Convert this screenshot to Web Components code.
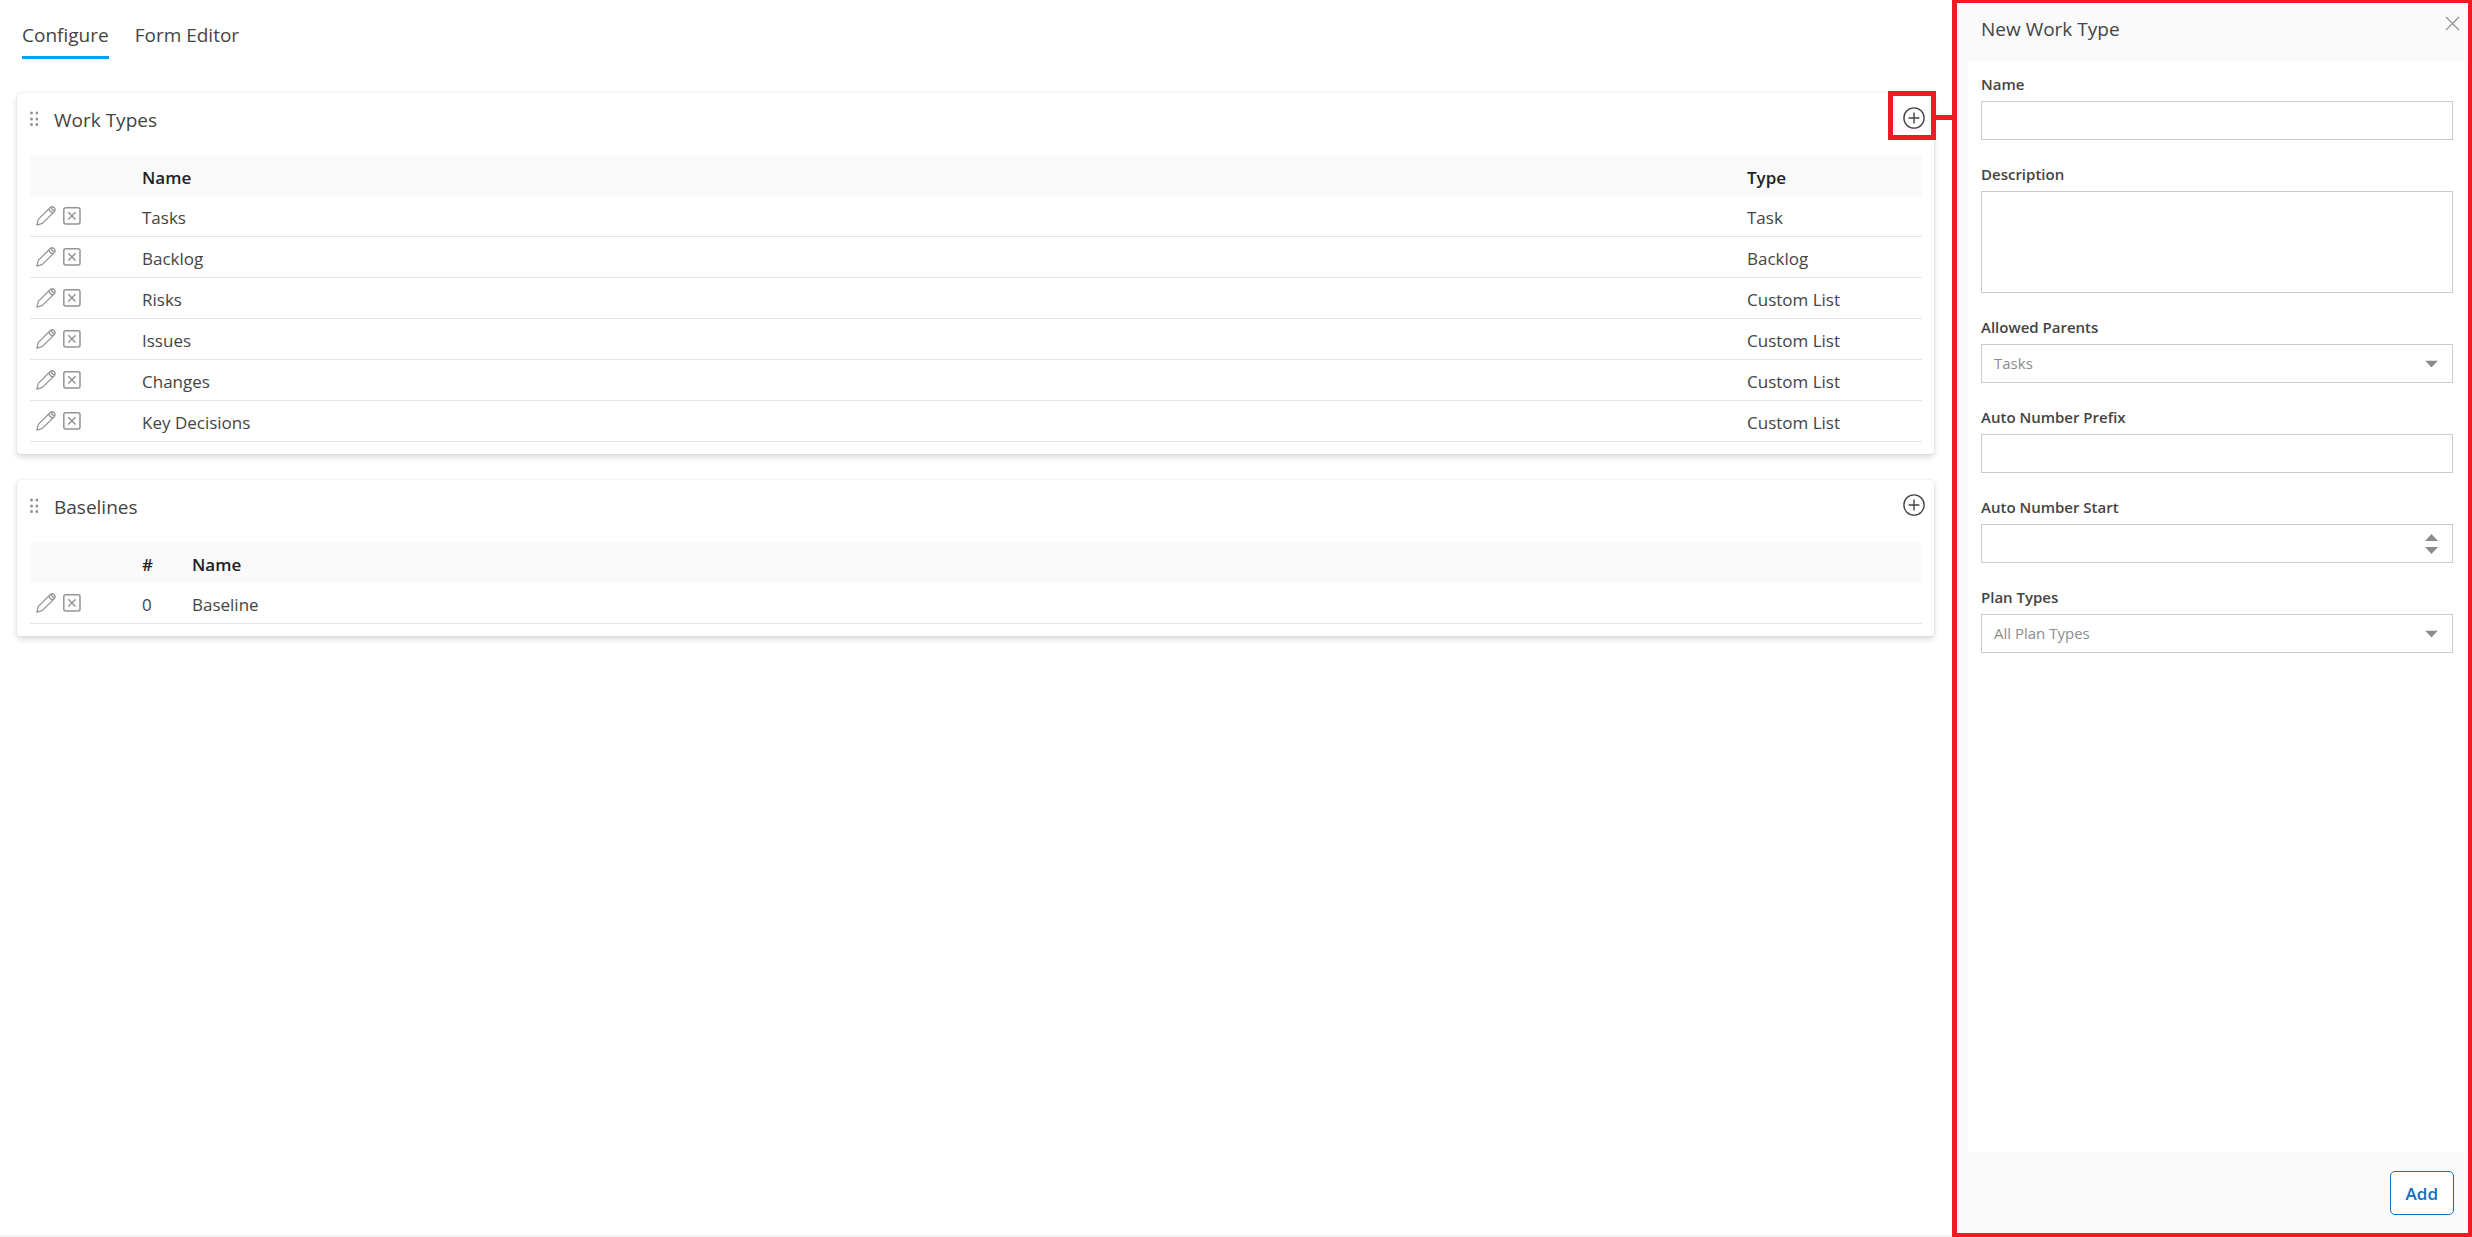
<!DOCTYPE html>
<html lang="en">
<head>
<meta charset="utf-8">
<title>Work Types</title>
<style>
  :root {
    --text: #444;
    --heading: #222;
    --muted: #8c8c8c;
    --line: #e6e6e6;
    --tint: #fafafa;
    --accent: #00a2f8;
    --action: #106ebe;
    --mark: #ed1c24;
  }
  * { box-sizing: border-box; }
  body {
    margin: 0;
    background: #fff;
    color: var(--text);
    font-family: "Open Sans", "Noto Sans", sans-serif;
    font-size: 17px;
  }
</style>
</head>
<body>
<app-shell>
  <tab-bar tabs="Configure,Form Editor"></tab-bar>
  <section-card highlighted>
    <span slot="title">Work Types</span>
    <data-grid columns='[{"label":"Name"},{"label":"Type","width":175}]'
      rows='[["Tasks","Task"],["Backlog","Backlog"],["Risks","Custom List"],["Issues","Custom List"],["Changes","Custom List"],["Key Decisions","Custom List"]]'></data-grid>
  </section-card>
  <section-card>
    <span slot="title">Baselines</span>
    <data-grid columns='[{"label":"#","width":50},{"label":"Name"}]' rows='[["0","Baseline"]]'></data-grid>
  </section-card>
  <side-panel slot="panel">
    <span slot="title">New Work Type</span>
    <form-field label="Name"></form-field>
    <form-field label="Description" kind="textarea"></form-field>
    <form-field label="Allowed Parents" kind="select" value="Tasks"></form-field>
    <form-field label="Auto Number Prefix"></form-field>
    <form-field label="Auto Number Start" kind="number"></form-field>
    <form-field label="Plan Types" kind="select" value="All Plan Types"></form-field>
  </side-panel>
</app-shell>

<script>
const BASE = `
  *, *::before, *::after { box-sizing: border-box; }
  button { font: inherit; color: inherit; background: none; border: 0; padding: 0; margin: 0; cursor: pointer; }
  svg { display: block; }
`;

class Base extends HTMLElement {
  connectedCallback() {
    if (this.shadowRoot) return;
    this.attachShadow({ mode: 'open' }).innerHTML = `<style>${BASE}${this.css()}</style>${this.html()}`;
  }
}

class AppShell extends Base {
  css() { return `
    :host { display: flex; min-height: 100vh; }
    main { flex: 1; min-width: 0; display: flex; flex-direction: column; gap: 26px; padding: 0 18px 0 17px; border-bottom: 2px solid #f4f4f4; }
    ::slotted(side-panel) { flex: 0 0 520px; }
  `; }
  html() { return `<main><slot></slot></main><slot name="panel"></slot>`; }
}

class TabBar extends Base {
  css() { return `
    :host { display: block; padding: 20px 5px 8px; }
    nav { display: flex; gap: 26px; font-size: 19px; line-height: 30px; }
    a { color: inherit; text-decoration: none; padding-bottom: 6px; border-bottom: 3px solid transparent; }
    a[aria-current] { border-color: var(--accent); }
  `; }
  html() {
    return `<nav>${this.getAttribute('tabs').split(',').map((t, i) =>
      `<a href="#"${i ? '' : ' aria-current="page"'}>${t}</a>`).join('')}</nav>`;
  }
}

class SectionCard extends Base {
  css() { return `
    :host { display: block; background: #fff; border-radius: 4px; padding: 0 12px 12px 13px;
      box-shadow: 0 0 2px rgba(0,0,0,.12), 0 3px 6px rgba(0,0,0,.15); }
    header { display: flex; align-items: center; height: 63px; padding-bottom: 13px; }
    h2 { flex: 1; margin: 0 0 0 16px; padding-top: 4px; font-size: 19px; line-height: 26px; font-weight: 400; }
    .add { position: relative; margin-right: -3px; }
    .mark { display: none; position: absolute; left: -15px; top: -16px; width: 48px; height: 49px; border: 5px solid var(--mark); pointer-events: none; }
    .mark::after { content: ""; position: absolute; left: 100%; top: 19px; width: 22px; height: 5px; background: var(--mark); }
    :host([highlighted]) .mark { display: block; }
  `; }
  html() { return `
    <header>
      <svg width="8" height="16" viewBox="0 0 8 16" fill="#949494">
        <circle cx="1.5" cy="3" r="1.5"/><circle cx="7" cy="3" r="1.5"/>
        <circle cx="1.5" cy="9" r="1.5"/><circle cx="7" cy="9" r="1.5"/>
        <circle cx="1.5" cy="14.500" r="1.5"/><circle cx="7" cy="14.500" r="1.5"/>
      </svg>
      <h2><slot name="title"></slot></h2>
      <button class="add" type="button" aria-label="Add">
        <svg width="22" height="22" viewBox="0 0 22 22" fill="none" stroke="#444" stroke-width="1.4">
          <circle cx="11" cy="11" r="10.1"/><path d="M11 5.6V16.4M5.6 11H16.4"/>
        </svg>
        <span class="mark"></span>
      </button>
    </header>
    <slot></slot>`; }
}

class DataGrid extends Base {
  css() { return `
    :host { display: block; }
    table { width: 100%; border-collapse: separate; border-spacing: 0; table-layout: fixed; }
    th, td { padding: 3px 0 0; text-align: left; line-height: 24px; }
    th { height: 40px; background: var(--tint); color: var(--heading); font-weight: 600; }
    td { height: 41px; border-bottom: 1px solid var(--line); }
    td:first-child { padding: 0; }
    .tools { width: 112px; }
    .icons { display: flex; align-items: center; gap: 7px; padding-left: 6px; }
  `; }
  html() {
    const cols = JSON.parse(this.getAttribute('columns'));
    const rows = JSON.parse(this.getAttribute('rows'));
    const tools = `<td><div class="icons">
      <button type="button" aria-label="Edit"><svg width="20" height="20" viewBox="0 0 21 21" fill="none" stroke="#949494" stroke-width="1.3" stroke-linejoin="round">
        <path d="M.9 20.1L2.4 14 15 1.6Q17-.1 19.200 1.700Q21 4 19.200 6L6.700 18.300Z"/><path d="M13.500 3.100Q14.300 6.700 17.800 7.300M16.200 1.200Q16.300 4.600 19.800 5"/>
      </svg></button>
      <button type="button" aria-label="Delete"><svg width="18" height="18" viewBox="0 0 18 18" fill="none" stroke="#949494" stroke-width="1.5">
        <rect x=".8" y=".8" width="16.200" height="16.200" rx="2"/><path d="M5.300 5.300L12.500 12.500M12.500 5.300L5.300 12.500"/>
      </svg></button></div></td>`;
    return `<table><thead><tr><th class="tools"></th>${cols.map(c =>
      `<th${c.width ? ` style="width:${c.width}px"` : ''}>${c.label}</th>`).join('')}</tr></thead>
      <tbody>${rows.map(r => `<tr>${tools}${r.map(v => `<td>${v}</td>`).join('')}</tr>`).join('')}</tbody></table>`;
  }
}

class SidePanel extends Base {
  css() { return `
    :host { display: flex; flex-direction: column; background: var(--tint);
      border: solid var(--mark); border-width: 3px 4px 4px 5px; padding: 0 3px 0 11px; }
    header { display: flex; justify-content: space-between; align-items: flex-start; height: 58px; padding: 13px 5px 0 13px; }
    h2 { margin: 0; font-size: 19px; line-height: 26px; font-weight: 400; }
    form { flex: 1; background: #fff; padding: 13px 12px 0 13px; }
    footer { display: flex; justify-content: flex-end; padding: 19px 11px 18px; }
    footer button { height: 44px; padding: 0 15px; border: 1px solid var(--action); border-radius: 5px; background: #fff; color: var(--action); font-weight: 600; }
  `; }
  html() { return `
    <header><h2><slot name="title"></slot></h2>
      <button type="button" aria-label="Close"><svg width="15" height="15" viewBox="0 0 15 15" stroke="#949494" stroke-width="1.3"><path d="M1 1L14 14M14 1L1 14"/></svg></button>
    </header>
    <form><slot></slot></form>
    <footer><button type="button">Add</button></footer>`; }
}

class FormField extends Base {
  css() { return `
    :host { display: block; padding-bottom: 24px; }
    label { display: block; font-size: 15px; line-height: 20px; font-weight: 600; margin-bottom: 7px; }
    .box { position: relative; }
    input, textarea, select { display: block; width: 100%; height: 39px; margin: 0; padding: 0 12px; border: 1px solid #ccc; border-radius: 0;
      background: #fff; color: var(--muted); font: inherit; font-size: 15px; appearance: none; -moz-appearance: textfield; }
    select { padding-bottom: 2px; }
    textarea { height: 102px; resize: none; }
    input::-webkit-inner-spin-button { appearance: none; }
    svg { position: absolute; right: 15px; top: 50%; transform: translateY(-50%); pointer-events: none; }
  `; }
  html() {
    const kind = this.getAttribute('kind');
    const value = this.getAttribute('value');
    const control = {
      textarea: '<textarea id="c"></textarea>',
      select: `<select id="c"><option>${value}</option></select><svg width="13" height="7" fill="#8c8c8c"><path d="M0 0H13L6.500 7Z"/></svg>`,
      number: '<input id="c" type="number"><svg width="13" height="20" fill="#8c8c8c"><path d="M0 7H13L6.500 0ZM0 13H13L6.500 20Z"/></svg>'
    }[kind] || '<input id="c" type="text">';
    return `<label for="c">${this.getAttribute('label')}</label><div class="box">${control}</div>`;
  }
}

customElements.define('app-shell', AppShell);
customElements.define('tab-bar', TabBar);
customElements.define('section-card', SectionCard);
customElements.define('data-grid', DataGrid);
customElements.define('side-panel', SidePanel);
customElements.define('form-field', FormField);
</script>
</body>
</html>
